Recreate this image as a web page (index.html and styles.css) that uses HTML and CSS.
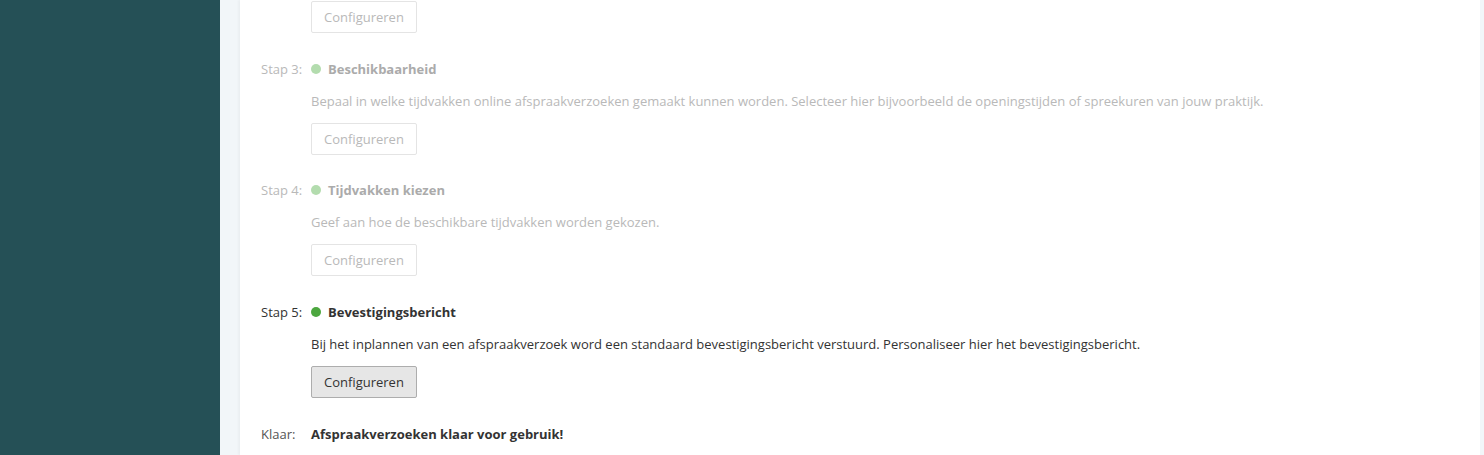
FILE: index.html
```html
<!DOCTYPE html>
<html lang="nl">
<head>
<meta charset="utf-8">
<title>Afspraakverzoeken</title>
<link rel="stylesheet" href="styles.css">
</head>
<body>
<div class="layout">
  <aside class="sidebar"></aside>
  <main class="content">
    <section class="panel">
      <div class="step step-top muted">
        <div class="label"></div>
        <div class="body">
          <button class="btn">Configureren</button>
        </div>
      </div>
      <div class="step step-tight muted">
        <div class="label">Stap 3:</div>
        <div class="body">
          <div class="title"><span class="dot"></span>Beschikbaarheid</div>
          <p class="desc">Bepaal in welke tijdvakken online afspraakverzoeken gemaakt kunnen worden. Selecteer hier bijvoorbeeld de openingstijden of spreekuren van jouw praktijk.</p>
          <button class="btn">Configureren</button>
        </div>
      </div>
      <div class="step muted">
        <div class="label">Stap 4:</div>
        <div class="body">
          <div class="title"><span class="dot"></span>Tijdvakken kiezen</div>
          <p class="desc">Geef aan hoe de beschikbare tijdvakken worden gekozen.</p>
          <button class="btn">Configureren</button>
        </div>
      </div>
      <div class="step active">
        <div class="label">Stap 5:</div>
        <div class="body">
          <div class="title"><span class="dot"></span>Bevestigingsbericht</div>
          <p class="desc">Bij het inplannen van een afspraakverzoek word een standaard bevestigingsbericht verstuurd. Personaliseer hier het bevestigingsbericht.</p>
          <button class="btn">Configureren</button>
        </div>
      </div>
      <div class="step done">
        <div class="label">Klaar:</div>
        <div class="body">
          <div class="title">Afspraakverzoeken klaar voor gebruik!</div>
        </div>
      </div>
    </section>
  </main>
</div>
</body>
</html>
```

FILE: styles.css
```css
html, body {
  margin: 0;
  padding: 0;
  height: 100%;
  overflow: hidden;
}
body {
  font-family: "Open Sans", "Liberation Sans", sans-serif;
  font-size: 13px;
  color: #333;
}
.layout {
  display: flex;
  height: 455px;
}
.sidebar {
  width: 220px;
  flex: 0 0 220px;
  background: #255056;
}
.content {
  flex: 1;
  background: #f2f6f9;
  padding: 0 4px 0 20px;
  display: flex;
}
.panel {
  flex: 1;
  background: #fff;
  box-shadow: -2px 0 2px rgba(0, 0, 0, 0.03);
  padding: 1px 0 0 21px;
}
.step {
  display: grid;
  grid-template-columns: 50px 1fr;
  margin-bottom: 26px;
}
.step-top {
  margin-bottom: 26px;
}
.step-tight {
  margin-bottom: 25px;
}
.label {
  line-height: 20px;
}
.title {
  display: flex;
  align-items: center;
  font-weight: 700;
  line-height: 20px;
}
.dot {
  width: 10px;
  height: 10px;
  border-radius: 50%;
  margin-right: 7px;
}
.desc {
  margin: 12px 0 0;
  line-height: 20px;
}
.btn {
  display: block;
  margin-top: 12px;
  font-family: inherit;
  font-size: 13px;
  line-height: 18px;
  padding: 6px 12px;
  border-radius: 2px;
  cursor: pointer;
}
.step-top .btn {
  margin-top: 0;
}
.muted .label,
.muted .desc {
  color: #b9b9b9;
}
.muted .title {
  color: #ababab;
}
.muted .dot {
  background: #b3dcae;
}
.muted .btn {
  background: #fff;
  border: 1px solid #e4e4e4;
  color: #b9b9b9;
}
.active .label,
.active .desc {
  color: #333;
}
.active .title {
  color: #333;
}
.active .dot {
  background: #4ca73f;
}
.active .btn {
  background: #e6e6e6;
  border: 1px solid #adadad;
  color: #333;
}
.done .label {
  color: #555;
}
.done .title {
  color: #333;
}
```
